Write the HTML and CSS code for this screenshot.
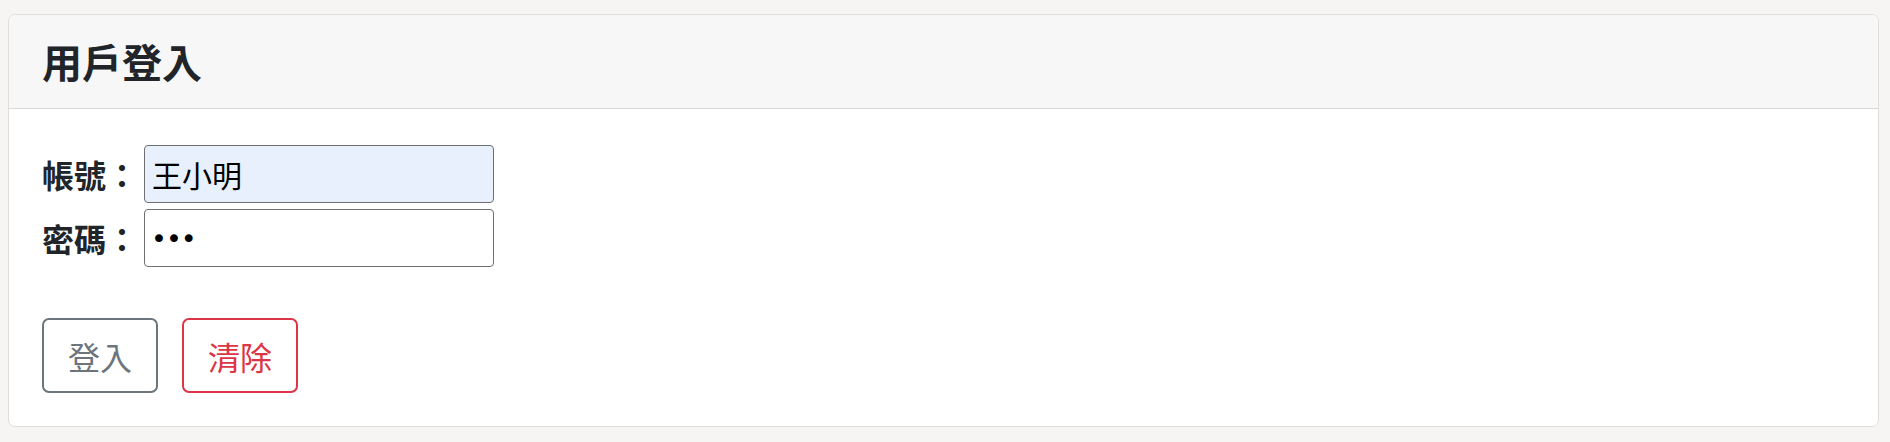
FILE: index.html
```html
<!DOCTYPE html>
<html lang="zh-Hant">
<head>
<meta charset="utf-8">
<title>用戶登入</title>
<link rel="stylesheet" href="styles.css">
</head>
<body>
<div class="card">
  <div class="card-header">
    <h1 class="card-title">用戶登入</h1>
  </div>
  <div class="card-body">
    <form class="login-form">
      <div class="form-row">
        <label class="form-label" for="account">帳號：</label>
        <input class="form-input autofilled" id="account" type="text" value="王小明">
      </div>
      <div class="form-row">
        <label class="form-label" for="password">密碼：</label>
        <input class="form-input password-input" id="password" type="password" value="123">
      </div>
      <div class="button-row">
        <button type="button" class="btn btn-secondary">登入</button>
        <button type="reset" class="btn btn-danger">清除</button>
      </div>
    </form>
  </div>
</div>
</body>
</html>
```

FILE: styles.css
```css
html, body {
  margin: 0;
  padding: 0;
}

body {
  background: #f6f5f3;
  padding: 14px 11px 15px 8px;
  font-family: "Noto Sans CJK TC", "Noto Sans", "Liberation Sans", sans-serif;
  color: #212529;
}

.card {
  background: #ffffff;
  border: 1px solid #dedede;
  border-radius: 7px;
  overflow: hidden;
}

.card-header {
  background: #f7f7f7;
  border-bottom: 1px solid #d8d8d8;
  padding: 22px 33px 23px;
}

.card-title {
  margin: 0;
  font-size: 40px;
  line-height: 48px;
  font-weight: 700;
  color: #212529;
}

.card-body {
  padding: 36px 33px 33px;
}

.login-form {
  display: flex;
  flex-direction: column;
  gap: 6px;
}

.form-row {
  display: flex;
  align-items: center;
  gap: 6px;
}

.form-label {
  width: 96px;
  font-size: 32px;
  line-height: 40px;
  font-weight: 700;
  color: #212529;
  white-space: nowrap;
}

.form-input {
  box-sizing: border-box;
  width: 350px;
  height: 58px;
  margin: 0;
  padding: 0 7px;
  border: 1px solid #6f6f6f;
  border-radius: 4px;
  background: #ffffff;
  font-family: "Noto Sans CJK TC", "Noto Sans", sans-serif;
  font-size: 30px;
  color: #000000;
  outline: none;
}

.form-input.autofilled {
  background: #e8f0fe;
}

.form-input.password-input {
  padding-left: 6px;
  font-family: "DejaVu Sans", sans-serif;
  font-size: 27px;
  letter-spacing: -1px;
}

.button-row {
  display: flex;
  gap: 24px;
  margin-top: 45px;
}

.btn {
  box-sizing: border-box;
  width: 116px;
  height: 75px;
  margin: 0;
  padding: 0;
  background: transparent;
  border: 2px solid;
  border-radius: 7px;
  font-family: "Noto Sans CJK TC", "Noto Sans", sans-serif;
  font-size: 32px;
  line-height: 1;
  cursor: pointer;
}

.btn-secondary {
  color: #6c757d;
  border-color: #6c757d;
}

.btn-danger {
  color: #dc3545;
  border-color: #dc3545;
}
```
